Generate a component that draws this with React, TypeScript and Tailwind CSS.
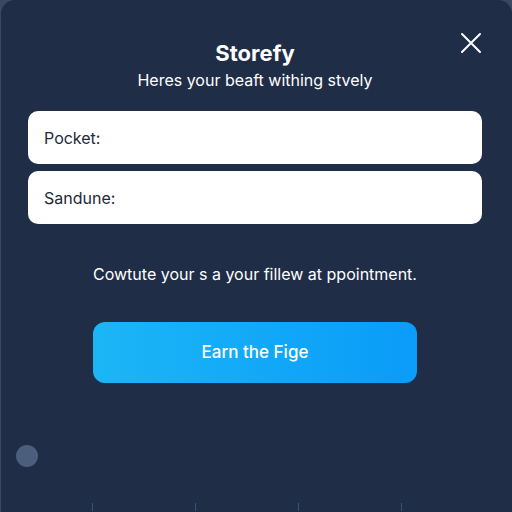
export default function App() {
  return (
    <div className="w-[512px] h-[512px] bg-[#3a4861] overflow-hidden" style={{ fontFamily: 'Inter, "Open Sans", sans-serif' }}>
      <div className="relative w-[511px] h-[520px] ml-px bg-[#1f2d47] rounded-t-[14px] flex flex-col items-center">
        <button className="absolute right-[30px] top-[32px] w-[22px] h-[22px] text-white">
          <svg viewBox="0 0 22 22" width="22" height="22" fill="none" stroke="currentColor" strokeWidth="2" strokeLinecap="round">
            <path d="M2 2L20 20M20 2L2 20" />
          </svg>
        </button>

        <h1 className="mt-[38px] -ml-[3px] text-[22px] leading-[30px] font-bold text-white">Storefy</h1>
        <p className="mt-[2px] -ml-[3px] text-[16px] leading-[20px] text-white">Heres your beaft withing stvely</p>

        <div className="mt-[21px] -ml-[3px] w-[454px] flex flex-col gap-[7px]">
          <div className="h-[53px] bg-white rounded-[10px] flex items-center px-[16px] text-[16px] text-[#1f2937]">Pocket:</div>
          <div className="h-[53px] bg-white rounded-[10px] flex items-center px-[16px] text-[16px] text-[#1f2937]">Sandune:</div>
        </div>

        <p className="mt-[39px] -ml-[3px] text-[16px] leading-[22px] text-white">Cowtute your s a your fillew at ppointment.</p>

        <button className="mt-[37px] -ml-[3px] w-[324px] h-[61px] rounded-[12px] bg-gradient-to-r from-[#1cb6f6] to-[#0a9cf9] text-white text-[17px] font-medium">
          Earn the Fige
        </button>

        <div className="self-start mt-[62px] ml-[15px] w-[22px] h-[22px] rounded-full bg-[#4b5e7d]" />

        <div className="self-start mt-[36px] ml-[91px] flex gap-[102px]">
          <div className="w-px h-[8px] bg-[#3a5075]" />
          <div className="w-px h-[8px] bg-[#3a5075]" />
          <div className="w-px h-[8px] bg-[#3a5075]" />
          <div className="w-px h-[8px] bg-[#3a5075]" />
        </div>
      </div>
    </div>
  );
}
